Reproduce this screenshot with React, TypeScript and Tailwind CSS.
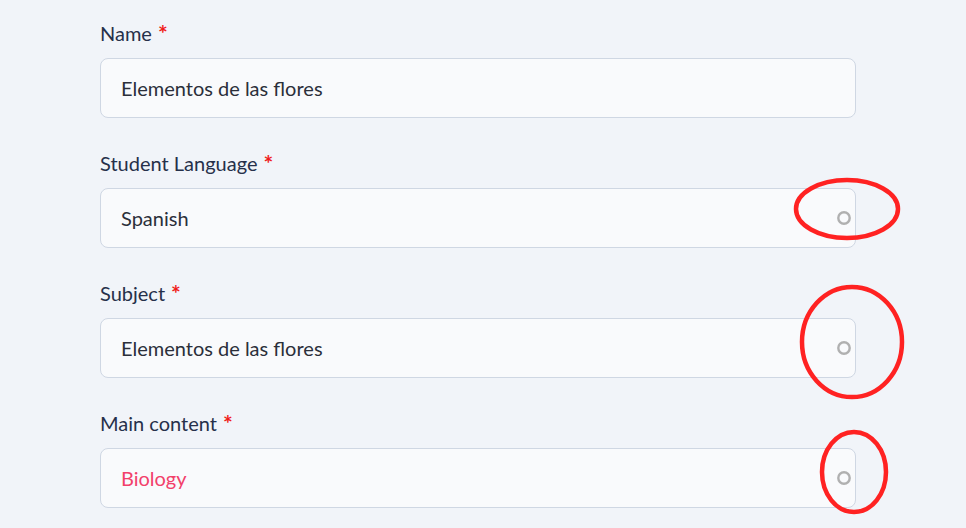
import React from "react";

const Spinner = () => (
  <svg width="16" height="16" viewBox="0 0 16 16" className="shrink-0">
    <circle cx="8" cy="8" r="5.7" fill="none" stroke="#b0b0b0" strokeWidth="2.4" />
  </svg>
);

type FieldProps = { label: string; value: string; icon?: boolean; valueClass?: string };

const Field = ({ label, value, icon, valueClass }: FieldProps) => (
  <div className="flex flex-col">
    <div className="h-[24px] leading-[24px] text-[20px] text-[#26304a] flex items-start">
      <span>{label}</span>
      <span className="ml-[6px] pt-[3px] text-[#f01c1c] text-[23px] leading-[18px] font-bold">*</span>
    </div>
    <div className="mt-[13px] h-[60px] rounded-[8px] border border-[#cfd7e3] bg-[#f9fafc] flex items-center pl-[20px] pr-[3px] justify-between">
      <span className={"text-[20px] " + (valueClass ?? "text-[#2b2f3a]")}>{value}</span>
      {icon ? <Spinner /> : null}
    </div>
  </div>
);

export default function App() {
  return (
    <div
      className="relative w-[966px] h-[528px] overflow-hidden bg-[#f1f4f9]"
      style={{ fontFamily: "Lato, 'Noto Sans', sans-serif" }}
    >
      <div className="pl-[100px] pt-[21px] w-[856px] flex flex-col gap-[33px]">
        <Field label="Name" value="Elementos de las flores" />
        <Field label="Student Language" value="Spanish" icon />
        <Field label="Subject" value="Elementos de las flores" icon />
        <Field label="Main content" value="Biology" icon valueClass="text-[#f2406a]" />
      </div>
      <svg className="absolute inset-0 pointer-events-none" width="966" height="528">
        <ellipse cx="847" cy="209" rx="51" ry="29" fill="none" stroke="#ff2222" strokeWidth="4.5" />
        <ellipse cx="852" cy="342" rx="50" ry="55" fill="none" stroke="#ff2222" strokeWidth="4.5" />
        <ellipse cx="854" cy="472" rx="32" ry="40" fill="none" stroke="#ff2222" strokeWidth="4.5" />
      </svg>
    </div>
  );
}
